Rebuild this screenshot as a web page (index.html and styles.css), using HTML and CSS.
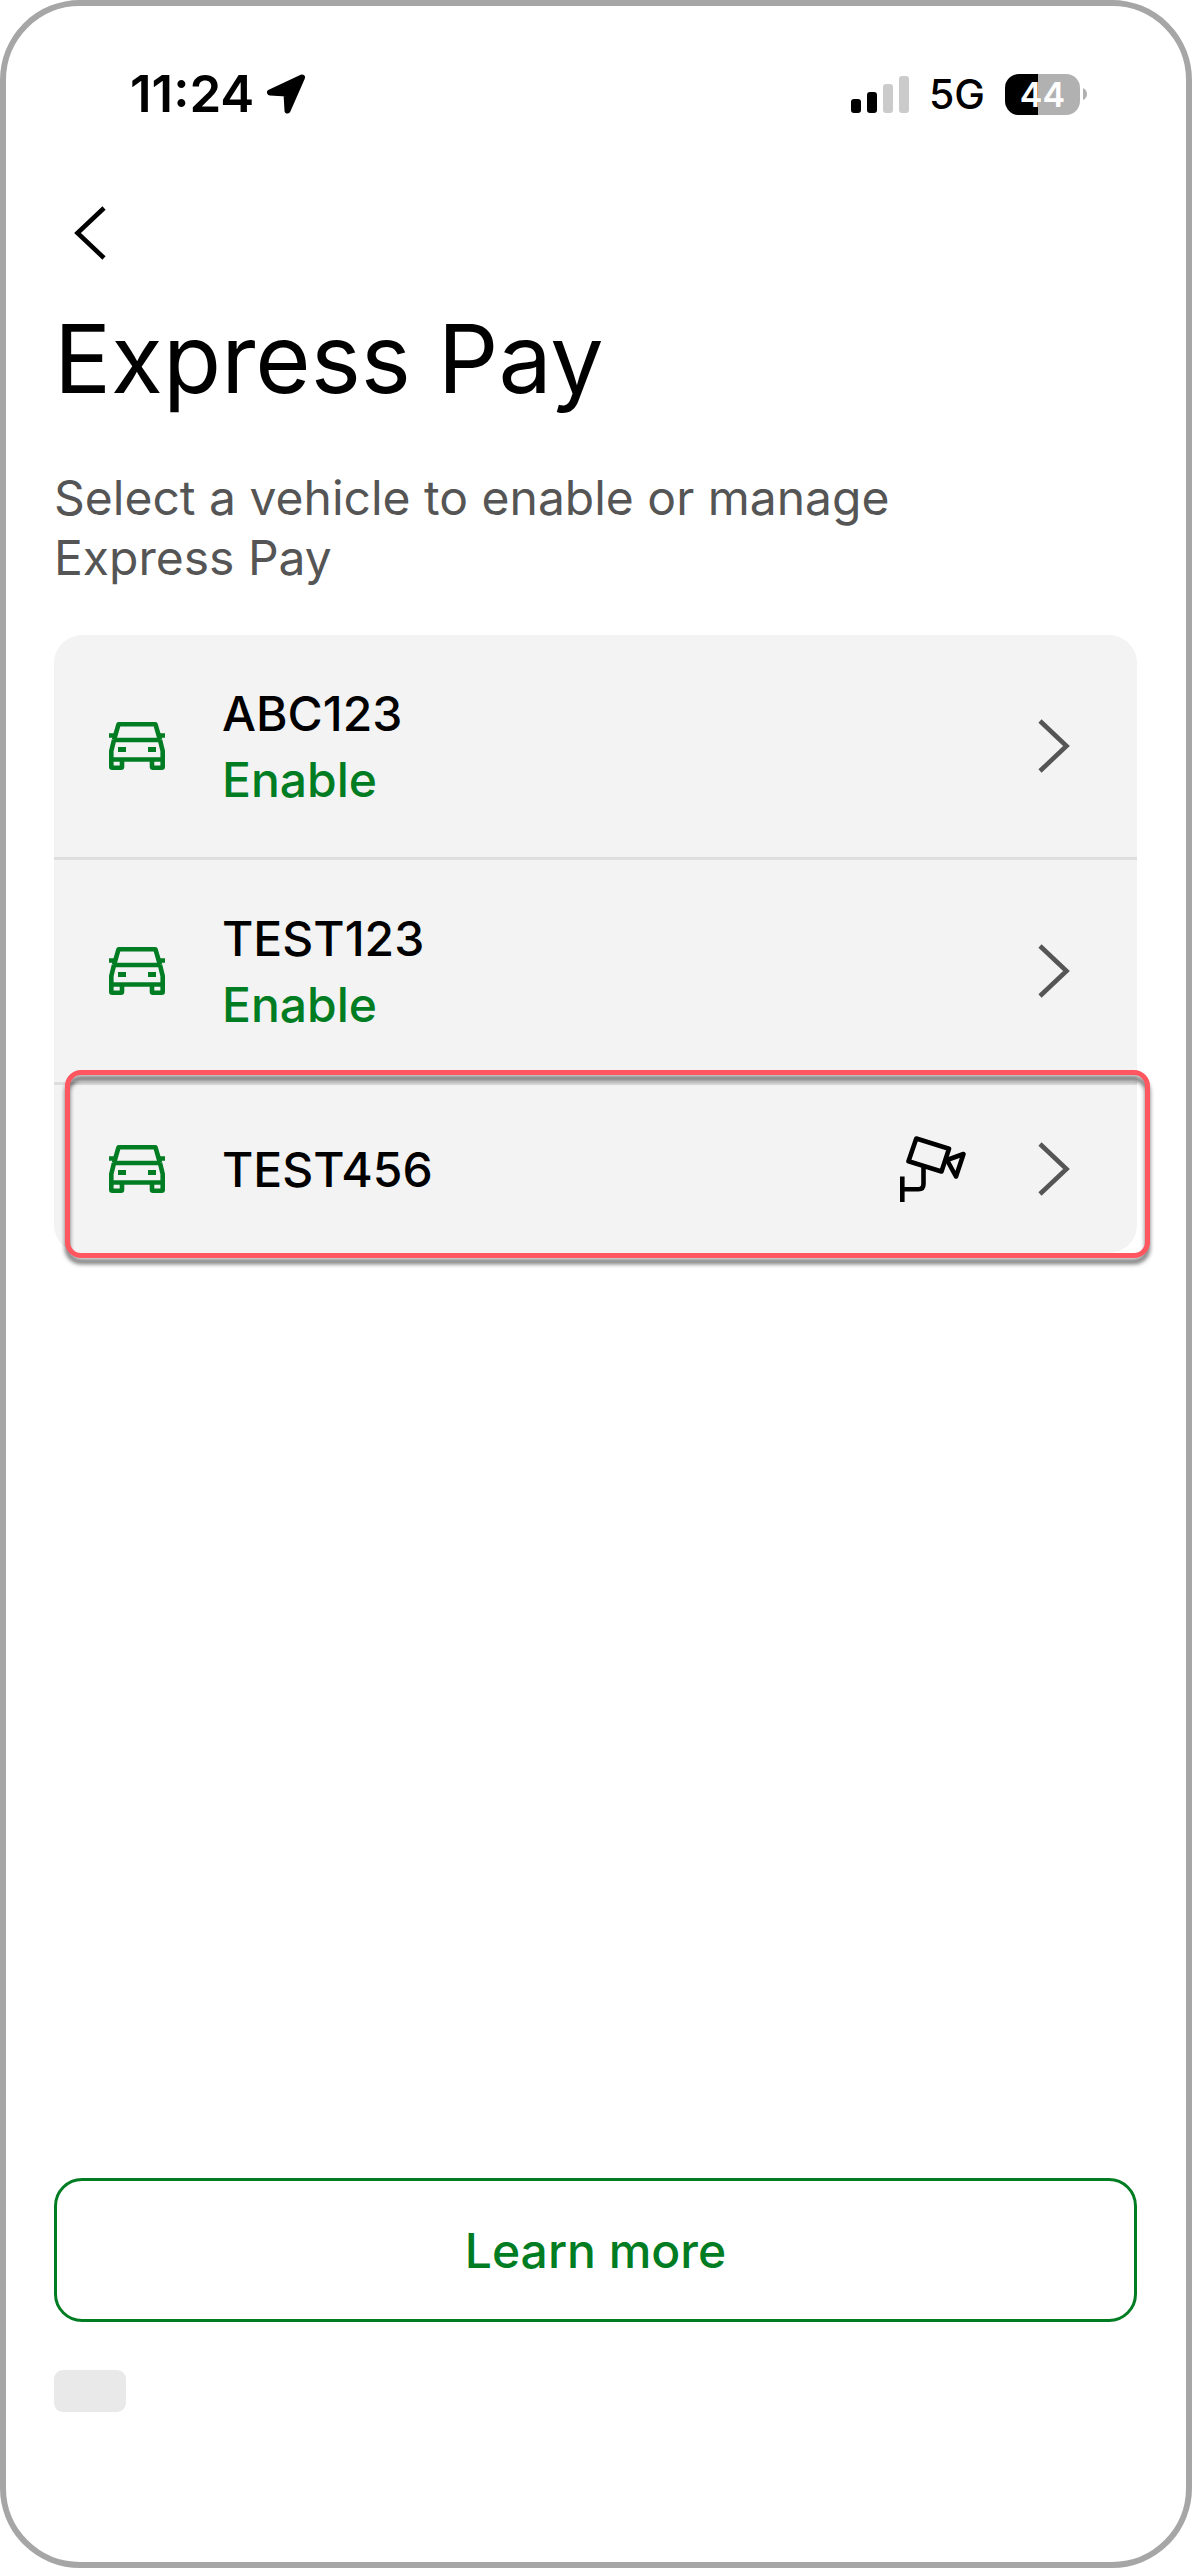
FILE: index.html
```html
<!DOCTYPE html>
<html lang="en">
<head>
<meta charset="utf-8">
<meta name="viewport" content="width=device-width, initial-scale=1">
<title>Express Pay</title>
<link rel="stylesheet" href="styles.css">
</head>
<body>
<svg class="sprite" aria-hidden="true">
  <symbol id="icon-car" viewBox="0 0 56 48">
    <g fill="none" stroke="currentColor" stroke-width="4.600" stroke-linejoin="round">
      <path d="M5 18 9.500 2.300H46.500L51 18"/>
      <path d="M0 13.500H6M50 13.500H56"/>
      <path d="M5 18H51"/>
      <path d="M5 18 2.300 29V44.700Q2.300 45.700 3.300 45.700H12Q13 45.700 13 44.700V38.500M51 18 53.700 29V44.700Q53.700 45.700 52.700 45.700H44Q43 45.700 43 44.700V38.500"/>
      <path d="M2.300 37.500H53.700"/>
    </g>
    <path fill="currentColor" d="M9 25H17V30H9zM39 25H47V30H39z"/>
  </symbol>
  <symbol id="icon-chevron" viewBox="0 0 32 54">
    <path d="M2 2 28.500 27 2 52" fill="none" stroke="currentColor" stroke-width="4.600"/>
  </symbol>
</svg>

<main class="phone">
  <header class="status">
    <div class="status-group">
      <span class="clock">11:24</span>
      <svg class="location" viewBox="0 0 40 40" aria-hidden="true">
        <path d="M36 3.500 4 18.500 20.500 19.500 21.500 36.500z" fill="currentColor" stroke="currentColor" stroke-width="6" stroke-linejoin="round"/>
      </svg>
    </div>
    <div class="status-group status-right">
      <svg class="signal" viewBox="0 0 58 38" aria-hidden="true">
        <rect x="0" y="24" width="10" height="14" rx="3"/>
        <rect x="16" y="17" width="10" height="21" rx="3"/>
        <rect x="32" y="9" width="10" height="29" rx="3" fill="#cbcbcb"/>
        <rect x="48" y="1" width="10" height="37" rx="3" fill="#cbcbcb"/>
      </svg>
      <span class="network">5G</span>
      <div class="battery-wrap">
        <span class="battery">44</span>
        <svg class="battery-tip" viewBox="0 0 4 12" aria-hidden="true"><path d="M0 0Q4 2 4 6T0 12z" fill="#b1b1b1"/></svg>
      </div>
    </div>
  </header>

  <button class="back" type="button" aria-label="Back">
    <svg class="chevron chevron-left" aria-hidden="true"><use href="#icon-chevron"/></svg>
  </button>

  <h1 class="title">Express Pay</h1>
  <p class="intro">Select a vehicle to enable or manage Express Pay</p>

  <ul class="vehicles">
    <li class="vehicle">
      <button class="row" type="button">
        <svg class="car" aria-hidden="true"><use href="#icon-car"/></svg>
        <span class="info"><span class="plate">ABC123</span><span class="action">Enable</span></span>
        <svg class="chevron" aria-hidden="true"><use href="#icon-chevron"/></svg>
      </button>
    </li>
    <li class="vehicle">
      <button class="row" type="button">
        <svg class="car" aria-hidden="true"><use href="#icon-car"/></svg>
        <span class="info"><span class="plate">TEST123</span><span class="action">Enable</span></span>
        <svg class="chevron" aria-hidden="true"><use href="#icon-chevron"/></svg>
      </button>
    </li>
    <li class="vehicle highlighted">
      <button class="row row-short" type="button">
        <svg class="car" aria-hidden="true"><use href="#icon-car"/></svg>
        <span class="info"><span class="plate">TEST456</span></span>
        <svg class="camera" viewBox="0 0 66 66" aria-hidden="true">
          <g fill="none" stroke="currentColor" stroke-width="4.600" stroke-linejoin="round">
            <path d="M16.300 2.500 49 12.700 41.500 35.500 8.500 25.300z"/>
            <path d="M47 24 63.500 18 56 40.500z"/>
            <path d="M23.500 30V48Q23.500 53.300 18.500 53.300H2.500M2.300 40.500V66"/>
          </g>
        </svg>
        <svg class="chevron" aria-hidden="true"><use href="#icon-chevron"/></svg>
      </button>
    </li>
  </ul>

  <footer class="footer">
    <button class="learn" type="button">Learn more</button>
    <div class="placeholder"></div>
  </footer>
</main>
</body>
</html>
```
FILE: styles.css
```css
*,
*::before,
*::after {
  box-sizing: border-box;
}

body {
  margin: 0;
  background: #fff;
  color: #000;
  font-family: Inter, "Liberation Sans", sans-serif;
  font-size: 48px;
  font-optical-sizing: none;
}

button {
  margin: 0;
  padding: 0;
  border: 0;
  background: none;
  color: inherit;
  font: inherit;
  text-align: left;
  cursor: pointer;
}

svg {
  display: block;
  flex: none;
}

.sprite {
  position: absolute;
  width: 0;
  height: 0;
}

.phone {
  display: flex;
  flex-direction: column;
  min-height: 100vh;
  padding: 58px 49px 150px 48px;
  border: 6px solid #a6a6a6;
  border-radius: 80px;
}

/* Status bar */
.status {
  display: flex;
  justify-content: space-between;
  padding: 0 50px 0 76px;
}

.status-group {
  display: flex;
  align-items: center;
  gap: 12px;
  height: 60px;
}

.status-right {
  gap: 20px;
}

.clock {
  font-size: 51px;
  font-weight: 600;
  line-height: 60px;
}

.location {
  width: 40px;
  height: 40px;
}

.signal {
  width: 58px;
  height: 38px;
}

.network {
  font-size: 41px;
  font-weight: 500;
  line-height: 60px;
}

.battery-wrap {
  display: flex;
  align-items: center;
  gap: 3px;
}

.battery {
  width: 75px;
  border-radius: 14px;
  background: linear-gradient(90deg, #000 44%, #b1b1b1 44%);
  color: #fff;
  font-size: 34px;
  font-weight: 600;
  line-height: 41px;
  text-align: center;
}

.battery-tip {
  width: 4px;
  height: 12px;
}

/* Heading */
.back {
  align-self: flex-start;
  margin: 82px 0 0 20px;
}

.chevron {
  width: 32px;
  height: 54px;
  color: #555;
}

.chevron-left {
  color: #000;
  transform: scaleX(-1);
}

.title {
  margin: 41px 0 0;
  font-size: 95px;
  font-weight: 400;
  line-height: 116px;
}

.intro {
  max-width: 920px;
  margin: 51px 0 47px;
  color: #555;
  line-height: 60px;
}

/* Vehicle list */
.vehicles {
  margin: 0;
  padding: 0;
  border-radius: 28px;
  background: #f3f3f3;
  list-style: none;
}

.vehicle + .vehicle {
  border-top: 3px solid #dedede;
}

.row {
  display: flex;
  align-items: center;
  width: 100%;
  padding: 44px 67px 44px 55px;
}

.row-short {
  padding-top: 50px;
  padding-bottom: 50px;
}

.car {
  width: 56px;
  height: 48px;
  color: #007c23;
}

.info {
  display: flex;
  flex: 1;
  flex-direction: column;
  padding: 2px 0 0 57px;
  font-weight: 500;
  line-height: 66px;
}

.action {
  color: #007c23;
}

.camera {
  width: 66px;
  height: 66px;
  margin-right: 72px;
}

/* Callout frame around the selected vehicle */
.highlighted {
  position: relative;
}

.highlighted::after {
  content: "";
  position: absolute;
  inset: -15px -13px -5px 11px;
  border: 5px solid #ff5660;
  border-radius: 16px;
  filter: drop-shadow(0 6px 2px rgba(0, 0, 0, 0.55));
  pointer-events: none;
}

/* Footer */
.footer {
  margin-top: auto;
}

.learn {
  width: 100%;
  padding: 40px 39px 38px;
  border: 3px solid #007c23;
  border-radius: 28px;
  color: #007c23;
  font-weight: 500;
  line-height: 60px;
  text-align: center;
}

.placeholder {
  width: 72px;
  height: 42px;
  margin-top: 48px;
  border-radius: 9px;
  background: #e9e9e9;
}
```
